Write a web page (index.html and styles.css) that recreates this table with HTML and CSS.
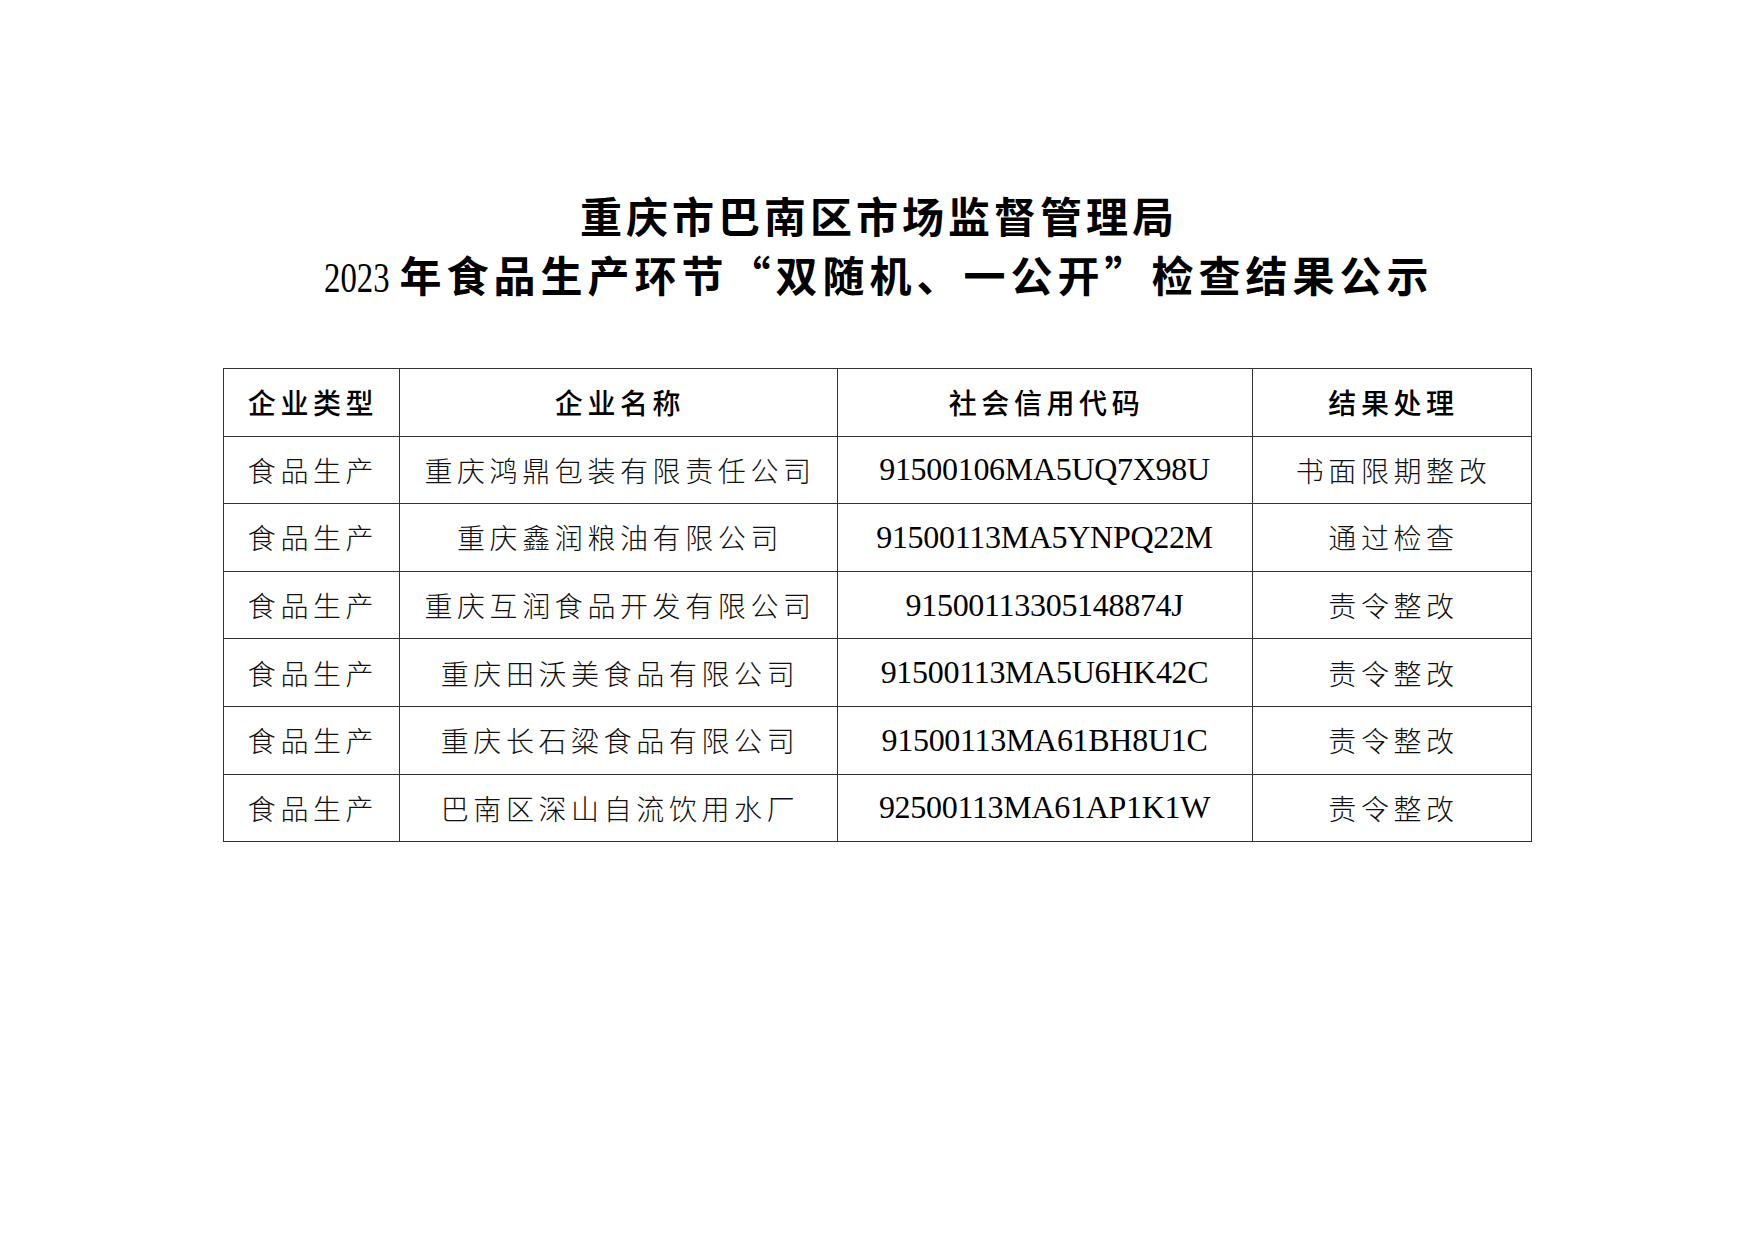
FILE: index.html
```html
<!DOCTYPE html>
<html lang="zh-CN">
<head>
<meta charset="utf-8">
<title>检查结果公示</title>
<link rel="stylesheet" href="styles.css">
</head>
<body>
<div class="page">
  <h1 class="title">
    <span class="line">重庆市巴南区市场监督管理局</span>
    <span class="line line2"><span class="num">2023</span>年食品生产环节“双随机、一公开”检查结果公示</span>
  </h1>
  <table class="result">
    <colgroup>
      <col class="c1"><col class="c2"><col class="c3"><col class="c4">
    </colgroup>
    <thead>
      <tr><th>企业类型</th><th>企业名称</th><th>社会信用代码</th><th>结果处理</th></tr>
    </thead>
    <tbody>
      <tr><td>食品生产</td><td>重庆鸿鼎包装有限责任公司</td><td class="code">91500106MA5UQ7X98U</td><td>书面限期整改</td></tr>
      <tr><td>食品生产</td><td>重庆鑫润粮油有限公司</td><td class="code">91500113MA5YNPQ22M</td><td>通过检查</td></tr>
      <tr><td>食品生产</td><td>重庆互润食品开发有限公司</td><td class="code">91500113305148874J</td><td>责令整改</td></tr>
      <tr><td>食品生产</td><td>重庆田沃美食品有限公司</td><td class="code">91500113MA5U6HK42C</td><td>责令整改</td></tr>
      <tr><td>食品生产</td><td>重庆长石粱食品有限公司</td><td class="code">91500113MA61BH8U1C</td><td>责令整改</td></tr>
      <tr><td>食品生产</td><td>巴南区深山自流饮用水厂</td><td class="code">92500113MA61AP1K1W</td><td>责令整改</td></tr>
    </tbody>
  </table>
</div>
</body>
</html>
```

FILE: styles.css
```css
html, body {
  margin: 0;
  padding: 0;
  background: #ffffff;
}

.page {
  width: 1754px;
  height: 1241px;
  padding-top: 185px;
  box-sizing: border-box;
  color: #000;
}

.title {
  margin: 0 0 60px 0;
  display: flex;
  flex-direction: column;
  align-items: center;
  font-family: "Noto Sans CJK SC", "Liberation Serif", serif;
  font-weight: 700;
  font-size: 42px;
  letter-spacing: 4px;
  line-height: 59px;
}

.title .line {
  display: block;
  padding-left: 4px;
}

.title .line2 {
  letter-spacing: 5px;
}

.title .num {
  display: inline-block;
  font-family: "Liberation Serif", serif;
  font-weight: 400;
  font-size: 42px;
  letter-spacing: 0;
  transform: scaleX(0.78);
  transform-origin: left center;
  margin-right: -9px;
}

.result {
  margin: 0 auto;
  width: 1308px;
  border-collapse: collapse;
  table-layout: fixed;
  font-family: "Noto Sans CJK SC", sans-serif;
  color: #111;
}

.result .c1 { width: 176px; }
.result .c2 { width: 438px; }
.result .c3 { width: 415px; }
.result .c4 { width: 279px; }

.result th,
.result td {
  border: 1px solid #333;
  height: 66.6px;
  padding: 0 0 0 4px;
  text-align: center;
  vertical-align: middle;
  font-size: 28px;
  letter-spacing: 4.6px;
  white-space: nowrap;
}

.result th {
  font-weight: 500;
  color: #000;
}

.result td {
  font-weight: 300;
}

.result td.code {
  font-family: "Liberation Serif", serif;
  font-weight: 400;
  font-size: 32px;
  letter-spacing: -0.3px;
  padding-left: 0;
  color: #000;
}
```
